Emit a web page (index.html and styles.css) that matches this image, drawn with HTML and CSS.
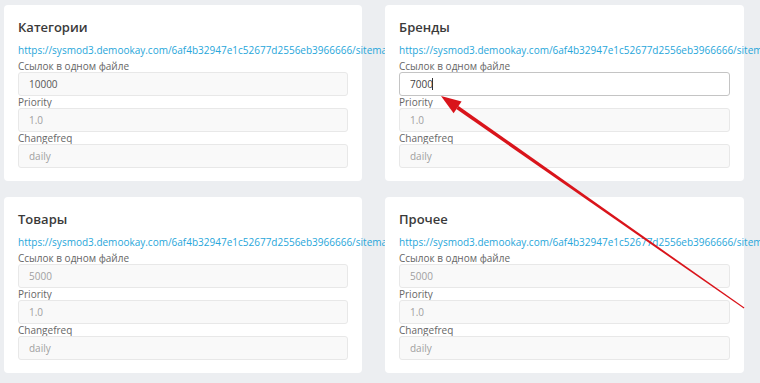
FILE: index.html
```html
<!DOCTYPE html>
<html lang="ru">
<head>
  <meta charset="UTF-8">
  <title>Sitemap</title>
  <link rel="stylesheet" href="styles.css">
</head>
<body>
  <div class="sitemap-grid">
    <section class="sitemap-card">
      <h3 class="sitemap-card__title">Категории</h3>
      <a class="sitemap-card__link" href="#">https://sysmod3.demookay.com/6af4b32947e1c52677d2556eb3966666/sitemap_categories.xml</a>
      <label class="form-label">Ссылок в одном файле</label>
      <input class="form-input form-input--filled" type="text" value="10000">
      <label class="form-label">Priority</label>
      <input class="form-input" type="text" value="1.0" readonly>
      <label class="form-label">Changefreq</label>
      <input class="form-input" type="text" value="daily" readonly>
    </section>

    <section class="sitemap-card">
      <h3 class="sitemap-card__title">Бренды</h3>
      <a class="sitemap-card__link" href="#">https://sysmod3.demookay.com/6af4b32947e1c52677d2556eb3966666/sitemap_brands.xml</a>
      <label class="form-label">Ссылок в одном файле</label>
      <span class="form-input-wrap form-input-wrap--caret">
        <input class="form-input form-input--focus" type="text" value="7000">
      </span>
      <label class="form-label">Priority</label>
      <input class="form-input" type="text" value="1.0" readonly>
      <label class="form-label">Changefreq</label>
      <input class="form-input" type="text" value="daily" readonly>
    </section>

    <section class="sitemap-card">
      <h3 class="sitemap-card__title">Товары</h3>
      <a class="sitemap-card__link" href="#">https://sysmod3.demookay.com/6af4b32947e1c52677d2556eb3966666/sitemap_products.xml</a>
      <label class="form-label">Ссылок в одном файле</label>
      <input class="form-input" type="text" value="5000">
      <label class="form-label">Priority</label>
      <input class="form-input" type="text" value="1.0" readonly>
      <label class="form-label">Changefreq</label>
      <input class="form-input" type="text" value="daily" readonly>
    </section>

    <section class="sitemap-card">
      <h3 class="sitemap-card__title">Прочее</h3>
      <a class="sitemap-card__link" href="#">https://sysmod3.demookay.com/6af4b32947e1c52677d2556eb3966666/sitemap_other.xml</a>
      <label class="form-label">Ссылок в одном файле</label>
      <input class="form-input" type="text" value="5000">
      <label class="form-label">Priority</label>
      <input class="form-input" type="text" value="1.0" readonly>
      <label class="form-label">Changefreq</label>
      <input class="form-input" type="text" value="daily" readonly>
    </section>
  </div>

  <!-- annotation arrow drawn over the screenshot -->
  <svg class="annotation" width="760" height="383" viewBox="0 0 760 383">
    <polygon points="456.3,109.1 458.5,105.9 744.4,307.6 743.8,308.6" fill="#d9141b"/>
    <polygon points="441,96 461.6,101.6 453.6,113.2" fill="#d9141b"/>
  </svg>
</body>
</html>
```

FILE: styles.css
```css
body, html {
  font-family: "Open Sans", sans-serif;
  color: #333;
}

html {
  overflow: hidden;
}

body {
  margin: 0;
  padding: 5px 0 0 4px;
  background: #eceef1;
  position: relative;
  height: 383px;
  box-sizing: border-box;
}

.sitemap-grid {
  display: grid;
  grid-template-columns: 358px 359px;
  column-gap: 23px;
  row-gap: 16px;
}

.sitemap-card {
  background: white;
  border-radius: 4px;
  padding: 12px 14px 13px;
  display: flex;
  flex-direction: column;
  min-width: 0;
}

.sitemap-card__title {
  margin: 0 0 6px;
  font-size: 13px;
  line-height: 20px;
  font-weight: 600;
  color: #3a3a3a;
}

.sitemap-card__link {
  font-size: 10px;
  line-height: 15px;
  margin-bottom: 2px;
  color: #27a6da;
  text-decoration: none;
  white-space: nowrap;
}

.form-label {
  font-size: 10px;
  line-height: 12px;
  color: #666;
}

.form-input {
  display: block;
  width: 100%;
  box-sizing: border-box;
  height: 24px;
  margin: 0;
  padding: 0 10px;
  border: 1px solid #e8e8e8;
  border-radius: 3px;
  background: #f9f9f9;
  font-family: "Open Sans", sans-serif;
  font-size: 10px;
  color: #a0a0a0;
  outline: none;
}

.form-input--filled {
  color: #555;
}

.form-input--focus {
  background: white;
  border-color: #c4c4c4;
  color: #444;
}

.form-input-wrap {
  display: block;
  position: relative;
}

.form-input-wrap--caret::after {
  content: "";
  position: absolute;
  left: 33px;
  top: 6px;
  width: 1px;
  height: 12px;
  background: #333;
}

.annotation {
  position: absolute;
  left: 0;
  top: 0;
  pointer-events: none;
}
```
